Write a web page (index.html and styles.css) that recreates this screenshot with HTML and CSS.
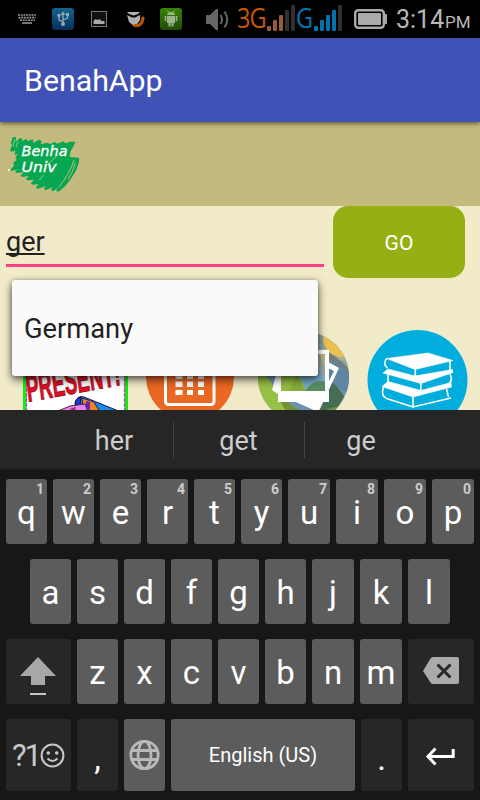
FILE: index.html
```html
<!DOCTYPE html>
<html lang="en">
<head>
<meta charset="utf-8">
<title>BenahApp</title>
<link rel="stylesheet" href="styles.css">
</head>
<body>
<div class="phone">
  <header class="status">
    <svg class="status-icons" width="236" height="38" viewBox="0 0 236 38">
      <g stroke="#929292" stroke-width="1.6" stroke-dasharray="2 .7"><path d="M18 15h18M18.5 17.6h17M20 20.2h15"/><path d="M22 23h10" stroke-dasharray="none"/></g>
      <defs>
        <linearGradient id="usb" x2="0" y2="1"><stop stop-color="#12658e"/><stop offset="1" stop-color="#052f5c"/></linearGradient>
        <linearGradient id="droid" x2="0" y2="1"><stop stop-color="#398500"/><stop offset="1" stop-color="#1d4d08"/></linearGradient>
      </defs>
      <rect x="52" y="8" width="22" height="22" rx="3" fill="url(#usb)"/>
      <g stroke="#9aa6b2" stroke-width="1.3" fill="none"><path d="M63 24V13M63 22l-4-2v-4M63 20l4.500-2v-3"/></g>
      <path d="M60.500 15l2.500-3.500 2.500 3.500z" fill="#9aa6b2"/><circle cx="63" cy="24" r="2" fill="#9aa6b2"/><circle cx="59" cy="15.500" r="1.700" fill="#9aa6b2"/><rect x="66" y="13" width="3" height="3" fill="#9aa6b2"/>
      <rect x="91.500" y="11.500" width="15" height="15" fill="#101010" stroke="#777"/>
      <path d="M93.500 24v-3l2-2 2 1 2-1 2 2h3v3z" fill="#aaa"/>
      <path d="M127 12h13l-2 2-4.500 1.500L129 14zM127 15l5 2.500h3l5-2.500v5l-5 7-6-5z" fill="#b0b0b0"/>
      <path d="M135 25.500q7 1 8-7.500" fill="none" stroke="#bd5500" stroke-width="3.200" stroke-linecap="round"/>
      <rect x="160" y="8" width="22" height="22" rx="3" fill="url(#droid)"/>
      <path d="M167 15q0-3 4-3t4 3zM167 16h8v7h-1.500v3.500h-2V23h-1v3.500h-2V23H167zM164.700 16h1.600v5h-1.600zM175.700 16h1.600v5h-1.600z" fill="#9fb18f"/>
      <path d="M167.500 10.500l1.500 2M174.500 10.500l-1.500 2" stroke="#9fb18f"/>
      <path d="M206 15h4l6-6h2v21h-2l-6-6h-4z" fill="#666"/>
      <path d="M220.500 15q3 4.500 0 9M224.500 11.500q5.500 8 0 16" fill="none" stroke="#666" stroke-width="2"/>
    </svg>
    <span class="net net-3g">3G</span>
    <svg class="bars" width="29" height="38" viewBox="0 0 29 38">
      <g fill="#985b35"><rect x="1" y="26" width="4" height="5" rx="1"/><rect x="7" y="20" width="4" height="11" rx="1"/><rect x="13" y="15" width="4" height="16" rx="1"/></g>
      <g fill="#303030"><rect x="19" y="10" width="4" height="21" rx="1"/><rect x="25" y="5" width="4" height="26" rx="1"/></g>
    </svg>
    <span class="net net-g">G</span>
    <svg class="bars" width="29" height="38" viewBox="0 0 29 38">
      <g fill="#0075ad"><rect x="1" y="26" width="4" height="5" rx="1"/><rect x="7" y="20" width="4" height="11" rx="1"/><rect x="13" y="15" width="4" height="16" rx="1"/><rect x="19" y="10" width="4" height="21" rx="1"/></g>
      <rect x="25" y="5" width="4" height="26" rx="1" fill="#303030"/>
    </svg>
    <svg class="battery" width="34" height="38" viewBox="0 0 34 38">
      <rect x="1.200" y="10.200" width="28.600" height="17.600" rx="3" fill="none" stroke="#aaa" stroke-width="2.400"/>
      <rect x="4" y="13" width="23" height="12" rx="1" fill="#aaa"/><rect x="30" y="14" width="3" height="10" rx="1" fill="#aaa"/>
    </svg>
    <span class="clock">3:14</span><span class="meridiem">PM</span>
  </header>

  <div class="appbar"><h1 class="title">BenahApp</h1></div>

  <div class="banner">
    <svg width="76" height="60" viewBox="7 134 76 60">
      <g transform="translate(0 130) scale(.33333)">
        <path d="M38 22L48 21 47 35 60 24 67 26 66 34 80 26 82 34 98 28 100 38 118 29 125 33 122 43 140 38 150 42 165 36 172 41 190 34 196 40 212 35 226 35 220 50 212 62 209 81 238 83 236 100 228 122 212 148 196 168 176 185 168 182 172 175 158 184 153 180 158 172 136 181 132 176 138 168 112 177 108 172 116 163 96 164 93 160 102 149 82 151 78 146 88 138 66 141 62 136 72 127 48 129 46 124 54 118 36 122 30 120 42 108 40 98 50 90 46 82 54 72 44 75 46 62 34 65 30 60 36 46 33 40z" fill="#07a650"/>
        <path d="M176 172q34-42 46-82M204 148q16-22 22-50" stroke="#c3b97e" stroke-width="3" fill="none"/>
        <path d="M118 150l14-16M140 105l28-24M48 52l6-18M44 28l-5 22" stroke="#c4ddb0" stroke-width="2"/>
        <circle cx="27" cy="120" r="3" fill="#fff"/>
      </g>
      <text class="logo-text" x="21.500" y="155.500" textLength="46" lengthAdjust="spacingAndGlyphs">Benha</text>
      <text class="logo-text" x="21.500" y="172" textLength="35" lengthAdjust="spacingAndGlyphs">Univ</text>
    </svg>
  </div>

  <main class="content">
    <div class="search">
      <div class="field"><span class="typed">ger</span></div>
      <button class="go">GO</button>
    </div>
    <div class="tiles">
      <svg width="480" height="80" viewBox="0 330 480 80">
        <rect x="23" y="333" width="105" height="90" fill="#0cf20c"/>
        <rect x="26.500" y="336" width="98" height="90" fill="#fff" stroke="#d437d4" stroke-width="1.200" stroke-dasharray="4 1"/>
        <text class="present" transform="translate(28 402) rotate(-10.500) skewX(-3)" textLength="95" lengthAdjust="spacingAndGlyphs">PRESENT!</text>
        <path d="M75 403q2-8 9-6l37 15H82z" fill="#168ce8" stroke="#151551"/>
        <path d="M82 398l12 4 6 10H84z" fill="#f28120" stroke="#30206e"/>
        <path d="M75 405q0-7 6-8l-1 8z" fill="#1b37ec" stroke="#111"/>
        <path d="M58 411l12-5 15-2 3 8z" fill="#e982ed" stroke="#512052"/>
        <path d="M86 401l4 1v10h-4z" fill="#6727b0"/><path d="M69 409l7-2-1 4z" fill="#8b326c"/>
        <circle cx="190" cy="377" r="44" fill="#eb6823"/>
        <rect x="165.500" y="352" width="48.500" height="52.500" rx="3" fill="none" stroke="#fff" stroke-width="3"/>
        <path d="M175.500 372h7v7h-7zM187 372h6v7h-6zM198 372h6v7h-6zM175.500 381.500h7v5.500h-7zM187 381.500h6v5.500h-6zM198 381.500h6v5.500h-6zM175.500 390h7v5h-7zM187 390h6v5h-6zM198 390h6v5h-6z" fill="#fff"/>
        <clipPath id="photo"><circle cx="303.500" cy="377" r="45.500"/></clipPath>
        <g clip-path="url(#photo)">
          <path d="M255 330h100v90H255z" fill="#6c94ae"/>
          <path d="M310 330h44v42q-13-12-26-14-14 1-18-5z" fill="#8ba5a0"/>
          <path d="M310 349h40v13q-17-5-40-4z" fill="#a6b395"/>
          <circle cx="342" cy="338" r="19" fill="#ecc14e"/>
          <path d="M322 350q15 4 29 22v10l-26-20z" fill="#737e7b"/>
          <path d="M326 360q10 1 24 14v20l-24-13z" fill="#5f87a2"/>
          <path d="M321 377l8 3q9 6 15 16l-8 16h-20z" fill="#466e54"/>
          <path d="M255 374q15 1 18 12l18 25h-36z" fill="#98c047"/>
          <path d="M277 395l22 15 17 3 22-7v15h-47z" fill="#729335"/>
          <path d="M276 375l-4 15 6 4 38 17h3l20-43-11-6-20 10z" fill="#fff"/>
          <path d="M328 368l6 3-5 10z" fill="#5d8498"/>
          <path d="M278 350h51v52h-51z" fill="#fff"/>
          <path d="M281 354h44v37h-44z" fill="#77abc9"/>
          <path d="M313 354h12v26q-6-10-12-15z" fill="#99acaa"/><path d="M319 354h6v13z" fill="#bcb77e"/>
          <path d="M281 370h16l9 21h-25z" fill="#97bc43"/><path d="M297 373l8 18h-16z" fill="#88ad3c"/>
          <path d="M305 391q10-13 20-9v9z" fill="#578c60"/>
        </g>
        <circle cx="417.500" cy="380" r="50" fill="#00addc"/>
        <g fill="#fff" stroke="#fff" stroke-width=".6" stroke-linejoin="round">
          <path d="M386.500 358.500L428 353l25 7.500-38 9z"/>
          <path d="M383 373l5-4 27 7 37.500-6.500.5 3-32 11z"/>
          <path d="M382 386.500l6-5 33 9 30-8 .5 4.500-38.500 10z"/>
        </g>
        <g fill="none" stroke="#fff" stroke-width="1.600">
          <path d="M386.500 358.500q-4 6 1 9.500M415.300 369v8M450 361v9"/>
          <path d="M388 374v9M420.800 382v9M450 374q3 6-1 10"/>
          <path d="M383.500 387q-3 9 3 11.500l26.500 8.500 38-9M413 396v10M446.500 389l2 8"/>
        </g>
      </svg>
    </div>
    <div class="dropdown">Germany</div>
  </main>

  <section class="keyboard">
    <div class="suggestions"><span>her</span><span>get</span><span>ge</span></div>
    <div class="keys">
      <div class="row letters">
        <div class="key">q<sup>1</sup></div><div class="key">w<sup>2</sup></div><div class="key">e<sup>3</sup></div><div class="key">r<sup>4</sup></div><div class="key">t<sup>5</sup></div><div class="key">y<sup>6</sup></div><div class="key">u<sup>7</sup></div><div class="key">i<sup>8</sup></div><div class="key">o<sup>9</sup></div><div class="key">p<sup>0</sup></div>
      </div>
      <div class="row home">
        <div class="key">a</div><div class="key">s</div><div class="key">d</div><div class="key">f</div><div class="key">g</div><div class="key">h</div><div class="key">j</div><div class="key">k</div><div class="key">l</div>
      </div>
      <div class="row lower">
        <div class="key dark"><svg width="65" height="65" viewBox="0 0 65 65"><path d="M32 18L50 37H39v9H25v-9H14z" fill="#a8a8a8"/><path d="M24 54h16v2H24z" fill="#c4c4c4"/></svg></div>
        <div class="key">z</div><div class="key">x</div><div class="key">c</div><div class="key">v</div><div class="key">b</div><div class="key">n</div><div class="key">m</div>
        <div class="key dark"><svg width="66" height="65" viewBox="0 0 66 65"><path d="M25 18h24q2 0 2 2v23q0 2-2 2H25q-1.500 0-2.500-1.500L15 32l7.500-12.500Q23.500 18 25 18z" fill="#aaa"/><path d="M29.500 25.500l13 13m0-13l-13 13" stroke="#272727" stroke-width="3"/></svg></div>
      </div>
      <div class="row bottom">
        <div class="key dark symbols"><span>?1</span><svg width="25" height="25" viewBox="0 0 25 25"><circle cx="12.500" cy="12.500" r="10.900" fill="none" stroke="#c8c8c8" stroke-width="2"/><circle cx="8.300" cy="10" r="1.800" fill="#c8c8c8"/><circle cx="16.700" cy="10" r="1.800" fill="#c8c8c8"/><path d="M7.500 15.500q5 5 10 0" fill="none" stroke="#c8c8c8" stroke-width="2"/></svg></div>
        <div class="key dark comma">,</div>
        <div class="key"><svg width="41" height="72" viewBox="0 0 41 72"><g fill="none" stroke="#b9b9b9" stroke-width="2.800"><circle cx="20.500" cy="36" r="13.700"/><ellipse cx="20.500" cy="36" rx="6.500" ry="13.700"/><path d="M8 31.500h25M8 40.500h25"/></g></svg></div>
        <div class="key space">English (US)</div>
        <div class="key dark period">.</div>
        <div class="key dark"><svg width="66" height="72" viewBox="0 0 66 72"><path d="M45.200 30v7.500H20M27.500 29.500L20 37.500l7.500 8" fill="none" stroke="#fff" stroke-width="3"/></svg></div>
      </div>
    </div>
  </section>
</div>
</body>
</html>
```
FILE: styles.css
```css
* { box-sizing: border-box; }
body { margin: 0; font-family: Roboto, sans-serif; }
svg { display: block; flex: none; }
.phone { width: 480px; height: 800px; overflow: hidden; display: flex; flex-direction: column; background: #f1ebca; }

.status { height: 38px; flex: none; display: flex; background: #000; color: #b8b8b8; white-space: nowrap; }
.net { font: 27px/36px "Open Sans", sans-serif; letter-spacing: -1px; transform: scaleX(.87); transform-origin: left; }
.net-3g { color: #c4560b; margin-left: 1px; width: 29px; }
.net-g { color: #0076ae; width: 17px; margin-left: 1px; }
.battery { margin-left: 12px; }
.clock { font-size: 25px; line-height: 39px; margin-left: 8px; width: 47px; }
.meridiem { font-size: 17px; line-height: 44px; margin-left: 2px; }

.appbar { height: 84px; flex: none; background: #4052b5; padding-left: 24px; position: relative; box-shadow: 0 1px 5px rgba(0,0,0,.65); }
.title { margin: 0; font-size: 30.3px; font-weight: 400; line-height: 86px; color: #fff; }
.banner { height: 84px; flex: none; background: #c4ba7e; padding: 12px 7px; }
.logo-text { font: italic 14px "DejaVu Sans", sans-serif; fill: #fff; stroke: #fff; stroke-width: .3px; }

.content { height: 204px; flex: none; position: relative; }
.search { display: flex; height: 72px; padding-left: 6px; }
.field { width: 318px; height: 61px; border-bottom: 3px solid #ff4081; font-size: 27px; line-height: 72px; color: #222; }
.typed { text-decoration: underline; text-decoration-thickness: 2px; text-underline-offset: 2px; text-decoration-skip-ink: none; }
.go { width: 132px; height: 72px; margin-left: 9px; padding: 2px 0 0; border: 0; border-radius: 15px; background: #96af15; color: #fff; font: 21px Roboto, sans-serif; }
.tiles { margin-top: 52px; height: 80px; }
.present { font: bold 38px "Liberation Sans", sans-serif; fill: #e60e1c; stroke: #8e1730; stroke-width: 1px; }
.dropdown { position: absolute; left: 12px; top: 74px; width: 306px; height: 96px; padding-left: 12px; border-radius: 3px; background: #fafafa; color: #222; font-size: 27.3px; line-height: 98px; box-shadow: 0 4px 10px rgba(0,0,0,.55), 0 1px 5px rgba(0,0,0,.35); }

.keyboard { height: 390px; flex: none; background: #171717; }
.suggestions { height: 60px; padding: 12px 44px 10px 55px; background: #262626; border-bottom: 2px solid #1f1f1f; display: grid; grid-template-columns: 118px 131px 114px; }
.suggestions span { text-align: center; font-size: 27px; line-height: 38px; height: 36px; color: #ccc; border-left: 1px solid #444; padding-right: 1px; }
.suggestions span:first-child { border-left: 0; padding-right: 0; }
.keys { padding: 9px 6px 9px; display: flex; flex-direction: column; gap: 15px; }
.row { display: grid; gap: 6px; height: 65px; }
.letters { grid-template-columns: repeat(6, 41px) repeat(4, 42px); }
.home { grid-template-columns: repeat(6, 41px) repeat(3, 42px); padding-left: 24px; }
.lower { grid-template-columns: 65px repeat(5, 41px) repeat(2, 42px) 66px; }
.bottom { grid-template-columns: 65px 41px 41px 184px 41px 66px; height: 72px; }
.key { position: relative; display: flex; align-items: center; justify-content: center; border-radius: 3px; background: #5c5c5c; color: #fff; font-size: 33px; line-height: 38px; height: 100%; min-width: 0; padding-top: 2px; }
.key:has(svg) { padding-top: 0; }
.key sup { position: absolute; right: 3px; top: 3px; font-size: 14px; font-weight: 700; line-height: 14px; color: #ccc; }
.dark { background: #272727; }
.symbols { font-size: 31px; color: #c8c8c8; letter-spacing: -2px; }
.symbols span { padding-top: 2px; }
.comma, .period { padding-top: 7px; }
.space { font-size: 20px; padding-top: 0; }
```
